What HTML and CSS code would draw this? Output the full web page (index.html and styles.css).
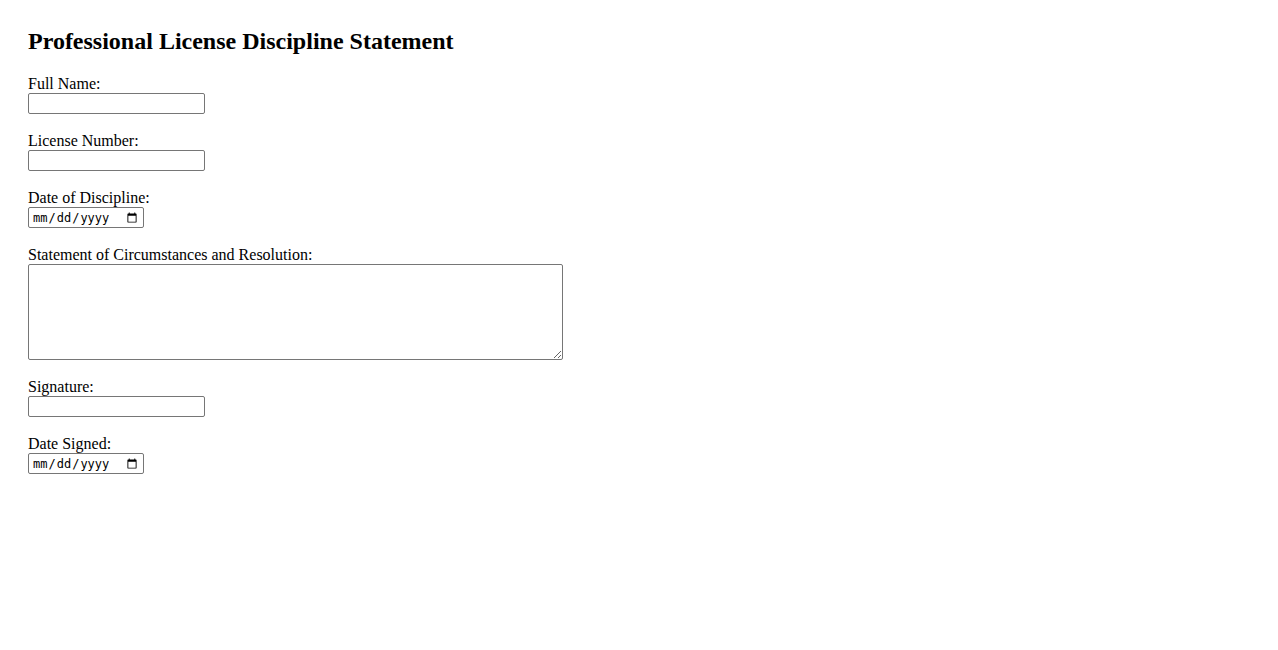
FILE: index.html
```html
<!DOCTYPE html>
<html lang="en">
<head>
    <meta charset="UTF-8">
    <meta name="viewport" content="width=device-width, initial-scale=1.0">
    <title>Professional License Discipline Statement</title>
    <link rel="stylesheet" href="styles.css">
</head>
<body>
    <div class="statement-container">
        <h2>Professional License Discipline Statement</h2>
        <form id="statement-form">
            <div class="form-group">
                <label for="full-name">Full Name:</label>
                <input type="text" id="full-name" name="full-name" class="text-input">
            </div>
            <div class="form-group">
                <label for="license-number">License Number:</label>
                <input type="text" id="license-number" name="license-number" class="text-input">
            </div>
            <div class="form-group">
                <label for="discipline-date">Date of Discipline:</label>
                <input type="date" id="discipline-date" name="discipline-date" class="date-input">
            </div>
            <div class="form-group">
                <label for="statement">Statement of Circumstances and Resolution:</label>
                <textarea id="statement" name="statement" class="statement-input"></textarea>
            </div>
            <div class="form-group">
                <label for="signature">Signature:</label>
                <input type="text" id="signature" name="signature" class="text-input">
            </div>
            <div class="form-group">
                <label for="date-signed">Date Signed:</label>
                <input type="date" id="date-signed" name="date-signed" class="date-input">
            </div>
        </form>
    </div>
</body>
</html>
```

FILE: styles.css
```css
body {
    font-family: "Liberation Serif", "Times New Roman", serif;
    font-size: 16px;
    color: #000;
    background-color: #ffffff;
    margin: 8px;
}
.statement-container {
    padding: 19px 20px 20px 20px;
}
.statement-container h2 {
    margin: 0 0 20px 0;
    font-size: 24px;
    line-height: 28px;
    font-weight: bold;
}
.form-group {
    display: flex;
    flex-direction: column;
    align-items: flex-start;
    margin-bottom: 18px;
}
.form-group label {
    line-height: 18px;
    height: 18px;
}
.text-input,
.date-input,
.statement-input {
    box-sizing: border-box;
    margin: 0;
    border: 1px solid #767676;
    border-radius: 2px;
    background-color: #ffffff;
}
.text-input {
    width: 177px;
    height: 21px;
    padding: 1px 2px;
    font-family: Arial, sans-serif;
    font-size: 13px;
}
.date-input {
    width: 116px;
    height: 21px;
    padding: 0 3px;
    font-family: "DejaVu Sans Mono", "Liberation Mono", monospace;
    font-size: 12px;
}
.statement-input {
    width: 535px;
    height: 96px;
    padding: 2px;
    font-family: "Liberation Mono", monospace;
    font-size: 13px;
}
```
